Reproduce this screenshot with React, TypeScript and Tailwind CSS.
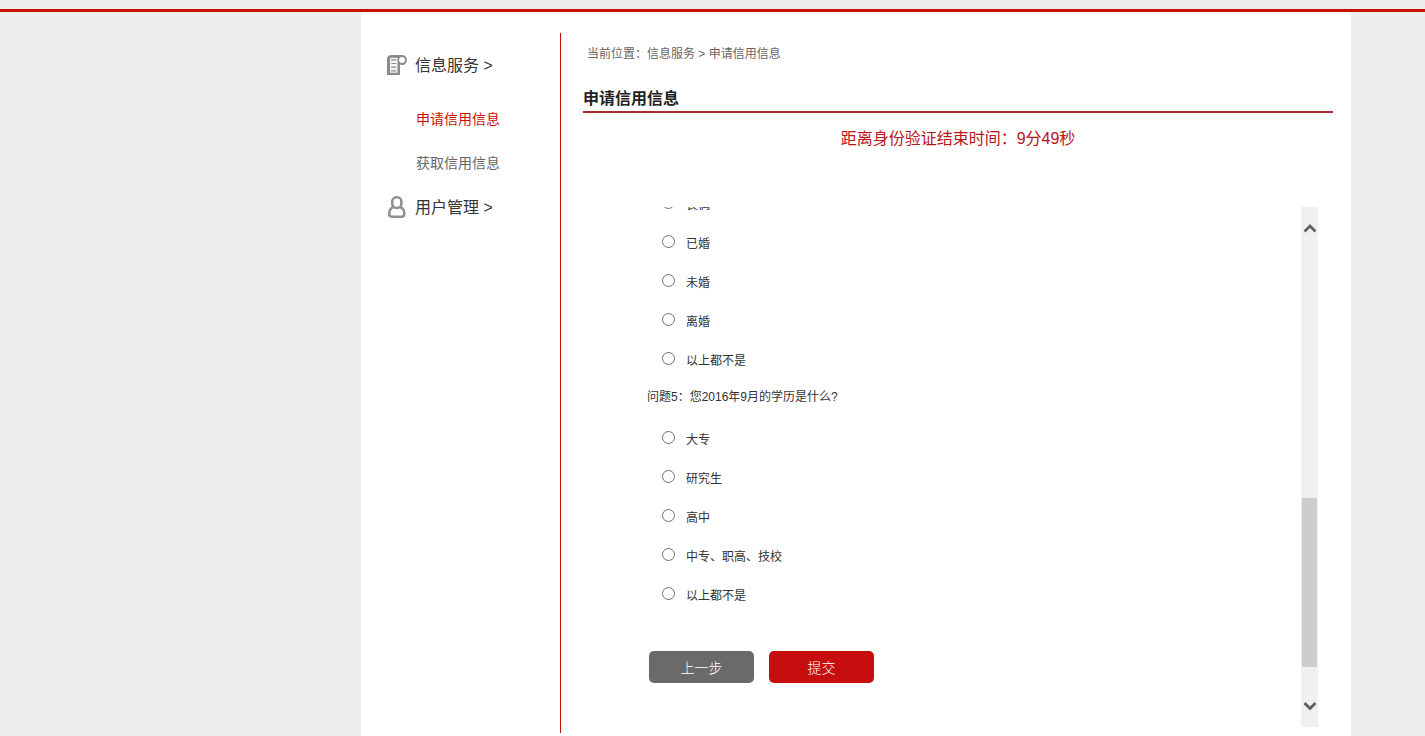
import { useState } from "react";

const maritalOptions = ["丧偶", "已婚", "未婚", "离婚", "以上都不是"];
const educationOptions = ["大专", "研究生", "高中", "中专、职高、技校", "以上都不是"];

function OptionGroup({ name, options }: { name: string; options: string[] }) {
  const [selected, setSelected] = useState<string | null>(null);
  return (
    <div>
      {options.map((option) => (
        <label key={option} className="flex h-[39px] items-center gap-[11px] pl-[79px] text-xs">
          <input
            type="radio"
            name={name}
            value={option}
            checked={selected === option}
            onChange={() => setSelected(option)}
            className="mb-1 size-[13px] shrink-0 appearance-none rounded-full border border-[#707070] bg-white checked:border-4"
          />
          <span>{option}</span>
        </label>
      ))}
    </div>
  );
}

function DocumentIcon() {
  return (
    <svg className="size-5 shrink-0" viewBox="0 0 20 20" fill="none" aria-hidden="true">
      <path d="M0 20V4.5C0 1.500 1.500 0 4.500 0H15a5 5 0 1 1-2 9.600V20z" fill="#8a8a8a" />
      <path d="M3 17.800V4.200C3 3.300 3.500 2.800 4.300 2.800H10.500V17.800z" fill="#f4f4f4" />
      <circle cx="15" cy="5.100" r="3" fill="#ffffff" />
      <path d="M4.200 4.800H9.200M4.200 8.500H9.200M4.200 12.200H9.200M4.200 15.800H9.200" stroke="#8a8a8a" strokeWidth="1.200" />
    </svg>
  );
}

function UserIcon() {
  return (
    <svg className="h-[22px] w-5 shrink-0" viewBox="0 0 20 22" fill="none" stroke="#909090" strokeWidth="2.500" aria-hidden="true">
      <path d="M6.500 10.800C3.800 12 2.300 14 2.300 16.800V18.200C2.300 20 3.200 20.700 5 20.700H14.500C16.300 20.700 17.200 20 17.200 18.200V16.800C17.200 14 15.700 12 13 10.800" />
      <rect x="5.200" y="1.300" width="9.200" height="10.700" rx="4.300" />
    </svg>
  );
}

function Chevron({ down = false }: { down?: boolean }) {
  return (
    <svg className="h-[10px] w-3" viewBox="0 0 12 10" fill="none" stroke="#606060" strokeWidth="2.800" aria-hidden="true">
      <path d={down ? "M.5 2L6 7.500l5.500-5.500" : "M.5 7.500L6 2l5.500 5.500"} />
    </svg>
  );
}

export default function App() {
  return (
    <div className="flex min-h-screen flex-col bg-[#eeeeee] font-['Liberation_Sans','Noto_Sans_CJK_SC',sans-serif] text-[#333333]">
      <header className="mt-[9px] h-[3px] bg-[#c50f00]" />
      <div className="mr-[74px] ml-[361px] flex grow bg-white pt-[21px] pb-[3px]">
        <aside className="w-[200px] shrink-0 border-r border-[#c11204] pl-[26px]">
          <nav>
            <a href="#service" className="flex h-16 items-center gap-2 text-base">
              <DocumentIcon />
              <span className="pt-0.5">信息服务 &gt;</span>
            </a>
            <div className="flex flex-col pl-[29px] text-sm">
              <a href="#apply" aria-current="page" className="flex h-11 items-center text-[#c80f05]">
                申请信用信息
              </a>
              <a href="#obtain" className="flex h-11 items-center text-[#666666]">
                获取信用信息
              </a>
            </div>
            <a href="#users" className="flex h-11 items-center gap-2 text-base">
              <UserIcon />
              <span className="pt-0.5">用户管理 &gt;</span>
            </a>
          </nav>
        </aside>

        <main className="min-w-0 grow pr-[18px] pl-[22px]">
          <p className="flex h-[42px] items-center pl-1 text-xs text-[#666666]">
            当前位置：信息服务 &gt; 申请信用信息
          </p>
          <h1 className="flex h-[38px] items-end border-b-2 border-[#b0292c] text-base font-bold text-[#222222]">
            申请信用信息
          </h1>
          <p className="mt-3 mb-[54px] text-center text-base leading-7 text-[#b81419]">
            距离身份验证结束时间：9分49秒
          </p>

          <section className="mr-[15px] flex h-[520px] overflow-hidden">
            <form className="-mt-[22px] min-w-0 grow" onSubmit={(event) => event.preventDefault()}>
              <OptionGroup name="marital" options={maritalOptions} />
              <p className="mb-1.5 pl-16 text-xs leading-[34px]">问题5：您2016年9月的学历是什么?</p>
              <OptionGroup name="education" options={educationOptions} />
              <div className="mt-9 flex gap-[15px] pl-[66px] text-sm font-light text-white">
                <button type="button" className="h-8 w-[105px] rounded-[5px] bg-[#6a6a6a] pt-0.5">
                  上一步
                </button>
                <button type="submit" className="h-8 w-[105px] rounded-[5px] bg-[#c70e0e] pt-0.5">
                  提交
                </button>
              </div>
            </form>
            <div className="flex w-[17px] shrink-0 flex-col bg-[#f0f0f0]">
              <button type="button" aria-label="向上滚动" className="flex h-[43px] items-center justify-center">
                <Chevron />
              </button>
              <div className="flex grow flex-col justify-end px-px pb-[17px]">
                <div className="h-[169px] bg-[#cdcdcd]" />
              </div>
              <button type="button" aria-label="向下滚动" className="flex h-[43px] items-center justify-center">
                <Chevron down />
              </button>
            </div>
          </section>
        </main>
      </div>
    </div>
  );
}
